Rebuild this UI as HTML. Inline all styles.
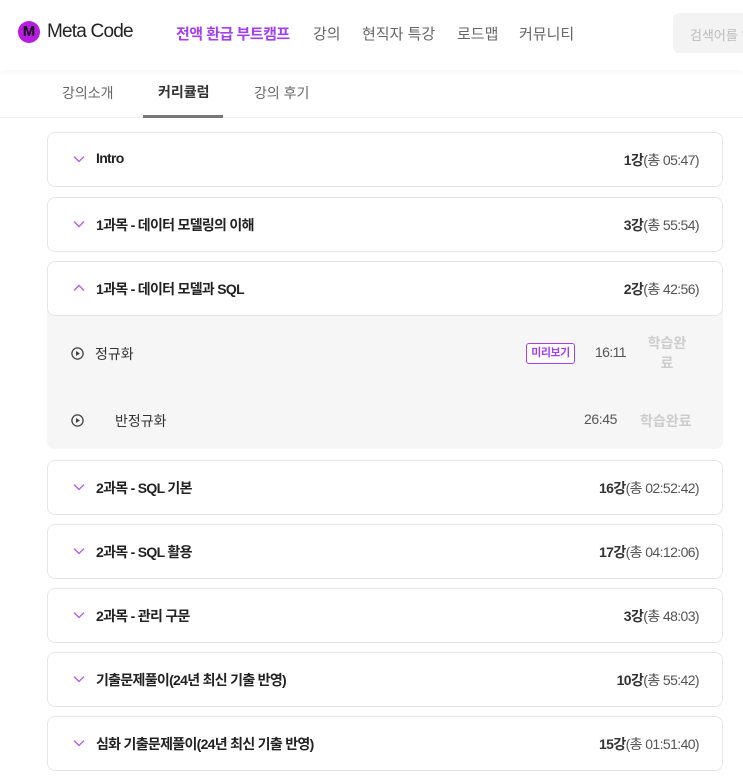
<html><head><style>
body{margin:0;width:743px;height:781px;overflow:hidden;background:#fff;font-family:"Liberation Sans","Noto Sans CJK KR",sans-serif;position:relative}
.a{position:absolute;white-space:nowrap}
.card{position:absolute;left:47px;width:674px;height:53px;border:1px solid #e6e6e6;border-radius:8px;background:#fff}
.card .t{position:absolute;left:48px;top:17px;font-size:14px;font-weight:bold;color:#222;letter-spacing:-0.7px}
.card .r{position:absolute;right:23px;top:17px;font-size:14px;color:#555;letter-spacing:-0.6px}
.card .r b{color:#333}
.card svg{position:absolute;left:25px;top:22px}
</style></head><body>
<div class="a" style="left:0;top:0;width:743px;height:70px;background:#fff;box-shadow:0 2px 6px rgba(0,0,0,0.04)"></div>
<div class="a" style="left:18px;top:21px;width:22px;height:22px;border-radius:50%;background:#b71ce0;color:#111;font-weight:bold;font-size:15px;text-align:center;line-height:22px">M</div>
<div class="a" style="left:47px;top:21px;font-size:19px;color:#222;letter-spacing:-0.8px">Meta Code</div>
<div class="a" style="left:176px;top:23px;font-size:15px;font-weight:bold;color:#a23ff0;letter-spacing:-0.5px">전액 환급 부트캠프</div>
<div class="a" style="left:313px;top:23px;font-size:15px;color:#666">강의</div>
<div class="a" style="left:362px;top:23px;font-size:15px;color:#666">현직자 특강</div>
<div class="a" style="left:457px;top:23px;font-size:15px;color:#666">로드맵</div>
<div class="a" style="left:519px;top:23px;font-size:15px;color:#666">커뮤니티</div>
<div class="a" style="left:673px;top:13px;width:80px;height:40px;border-radius:6px;background:#f3f3f3"></div>
<div class="a" style="left:690px;top:25px;font-size:13px;color:#bbb">검색어를 입</div>
<div class="a" style="left:0;top:70px;width:743px;height:47px;border-bottom:1px solid #eee"></div>
<div class="a" style="left:62px;top:83px;font-size:14px;color:#666">강의소개</div>
<div class="a" style="left:158px;top:82px;font-size:14px;font-weight:bold;color:#333">커리큘럼</div>
<div class="a" style="left:254px;top:83px;font-size:14px;color:#666">강의 후기</div>
<div class="a" style="left:143px;top:115px;width:80px;height:3px;background:#777"></div>

<div class="card" style="top:132px"><svg width="12" height="8" viewBox="0 0 12 8"><path d="M1 1.5L6 6.5L11 1.5" fill="none" stroke="#b466f0" stroke-width="1.5"/></svg><div class="t">Intro</div><div class="r"><b>1강</b>(총 05:47)</div></div>
<div class="card" style="top:197px"><svg width="12" height="8" viewBox="0 0 12 8"><path d="M1 1.5L6 6.5L11 1.5" fill="none" stroke="#b466f0" stroke-width="1.5"/></svg><div class="t">1과목 - 데이터 모델링의 이해</div><div class="r"><b>3강</b>(총 55:54)</div></div>
<div class="a" style="left:47px;top:300px;width:676px;height:149px;background:#f6f6f6;border-radius:0 0 8px 8px"></div>
<div class="card" style="top:261px"><svg width="12" height="8" viewBox="0 0 12 8"><path d="M1 6.5L6 1.5L11 6.5" fill="none" stroke="#b466f0" stroke-width="1.5"/></svg><div class="t">1과목 - 데이터 모델과 SQL</div><div class="r"><b>2강</b>(총 42:56)</div></div>
<svg class="a" style="left:71px;top:347px" width="13" height="13" viewBox="0 0 13 13"><circle cx="6.5" cy="6.5" r="5.6" fill="none" stroke="#444" stroke-width="1.3"/><path d="M5 4v5l4-2.5z" fill="#444"/></svg>
<div class="a" style="left:95px;top:344px;font-size:14px;color:#333">정규화</div>
<div class="a" style="left:526px;top:343px;width:47px;height:19px;border:1px solid #a23ff0;border-radius:3px;font-size:11px;font-weight:bold;color:#a23ff0;text-align:center;line-height:19px;background:#fff;letter-spacing:-0.5px">미리보기</div>
<div class="a" style="left:595px;top:344px;font-size:14px;color:#555;letter-spacing:-0.6px">16:11</div>
<div class="a" style="left:647px;top:333px;font-size:14px;color:#ccc;font-weight:bold;text-align:center;width:40px;white-space:normal;line-height:20px">학습완 료</div>
<svg class="a" style="left:71px;top:414px" width="13" height="13" viewBox="0 0 13 13"><circle cx="6.5" cy="6.5" r="5.6" fill="none" stroke="#444" stroke-width="1.3"/><path d="M5 4v5l4-2.5z" fill="#444"/></svg>
<div class="a" style="left:115px;top:411px;font-size:14px;color:#333">반정규화</div>
<div class="a" style="left:584px;top:411px;font-size:14px;color:#555;letter-spacing:-0.4px">26:45</div>
<div class="a" style="left:640px;top:411px;font-size:14px;color:#ccc;font-weight:bold">학습완료</div>

<div class="card" style="top:460px"><svg width="12" height="8" viewBox="0 0 12 8"><path d="M1 1.5L6 6.5L11 1.5" fill="none" stroke="#b466f0" stroke-width="1.5"/></svg><div class="t">2과목 - SQL 기본</div><div class="r"><b>16강</b>(총 02:52:42)</div></div>
<div class="card" style="top:524px"><svg width="12" height="8" viewBox="0 0 12 8"><path d="M1 1.5L6 6.5L11 1.5" fill="none" stroke="#b466f0" stroke-width="1.5"/></svg><div class="t">2과목 - SQL 활용</div><div class="r"><b>17강</b>(총 04:12:06)</div></div>
<div class="card" style="top:588px"><svg width="12" height="8" viewBox="0 0 12 8"><path d="M1 1.5L6 6.5L11 1.5" fill="none" stroke="#b466f0" stroke-width="1.5"/></svg><div class="t">2과목 - 관리 구문</div><div class="r"><b>3강</b>(총 48:03)</div></div>
<div class="card" style="top:652px"><svg width="12" height="8" viewBox="0 0 12 8"><path d="M1 1.5L6 6.5L11 1.5" fill="none" stroke="#b466f0" stroke-width="1.5"/></svg><div class="t">기출문제풀이(24년 최신 기출 반영)</div><div class="r"><b>10강</b>(총 55:42)</div></div>
<div class="card" style="top:716px"><svg width="12" height="8" viewBox="0 0 12 8"><path d="M1 1.5L6 6.5L11 1.5" fill="none" stroke="#b466f0" stroke-width="1.5"/></svg><div class="t">심화 기출문제풀이(24년 최신 기출 반영)</div><div class="r"><b>15강</b>(총 01:51:40)</div></div>
</body></html>
